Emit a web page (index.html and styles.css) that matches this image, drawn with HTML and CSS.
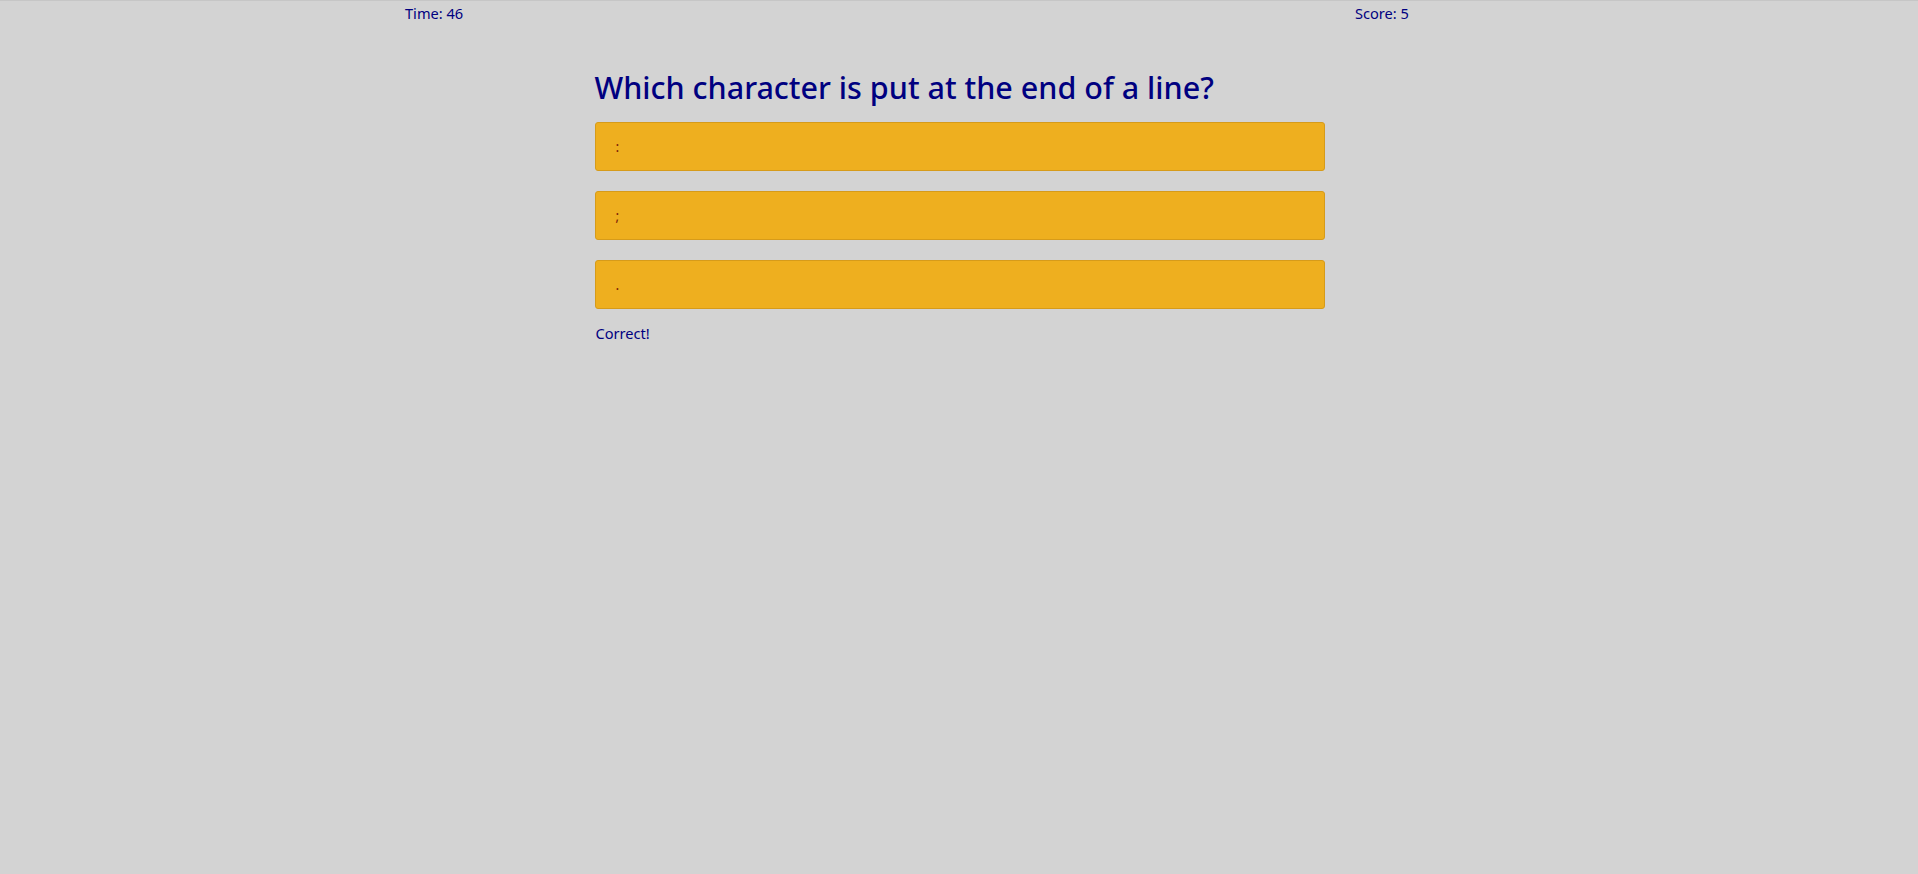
FILE: index.html
```html
<!DOCTYPE html>
<html lang="en">
<head>
<meta charset="utf-8">
<title>Quiz</title>
<link rel="stylesheet" href="styles.css">
</head>
<body>
<header class="topbar">
  <span class="stat">Time: 46</span>
  <span class="stat">Score: 5</span>
</header>
<main class="quiz">
  <h1 class="question">Which character is put at the end of a line?</h1>
  <div class="choices">
    <button class="choice">:</button>
    <button class="choice">;</button>
    <button class="choice">.</button>
  </div>
  <p class="result">Correct!</p>
</main>
</body>
</html>
```
FILE: styles.css
```css
html, body {
  margin: 0;
  padding: 0;
}
body {
  background: #d3d3d3;
  border-top: 1px solid #c6c6c6;
  font-family: "Noto Sans", "Open Sans", sans-serif;
  color: #000080;
  min-height: 873px;
}
.topbar {
  display: grid;
  grid-template-columns: 950px auto;
  width: 1110px;
  margin: 0 auto;
  padding-left: 1px;
  box-sizing: border-box;
  height: 23px;
  align-items: start;
  padding-top: 2px;
}
.stat {
  font-size: 14.6px;
  line-height: 20px;
}
.quiz {
  width: 730px;
  margin: 0 auto;
  padding-left: 1px;
}
.question {
  margin: 42px 0 0 0;
  font-size: 30.5px;
  font-weight: 500;
  line-height: 42px;
  color: #000080;
}
.choices {
  display: flex;
  flex-direction: column;
  gap: 20px;
  margin-top: 14px;
}
.choice {
  display: block;
  width: 100%;
  height: 49px;
  background: #eeaf1f;
  border: 1px solid #d69b1a;
  border-radius: 3px;
  text-align: left;
  padding: 0 0 0 20px;
  font-family: "Noto Sans", sans-serif;
  font-size: 14px;
  color: #7a2208;
}
.result {
  margin: 14px 0 0 1px;
  font-size: 14.6px;
  line-height: 20px;
}
```
